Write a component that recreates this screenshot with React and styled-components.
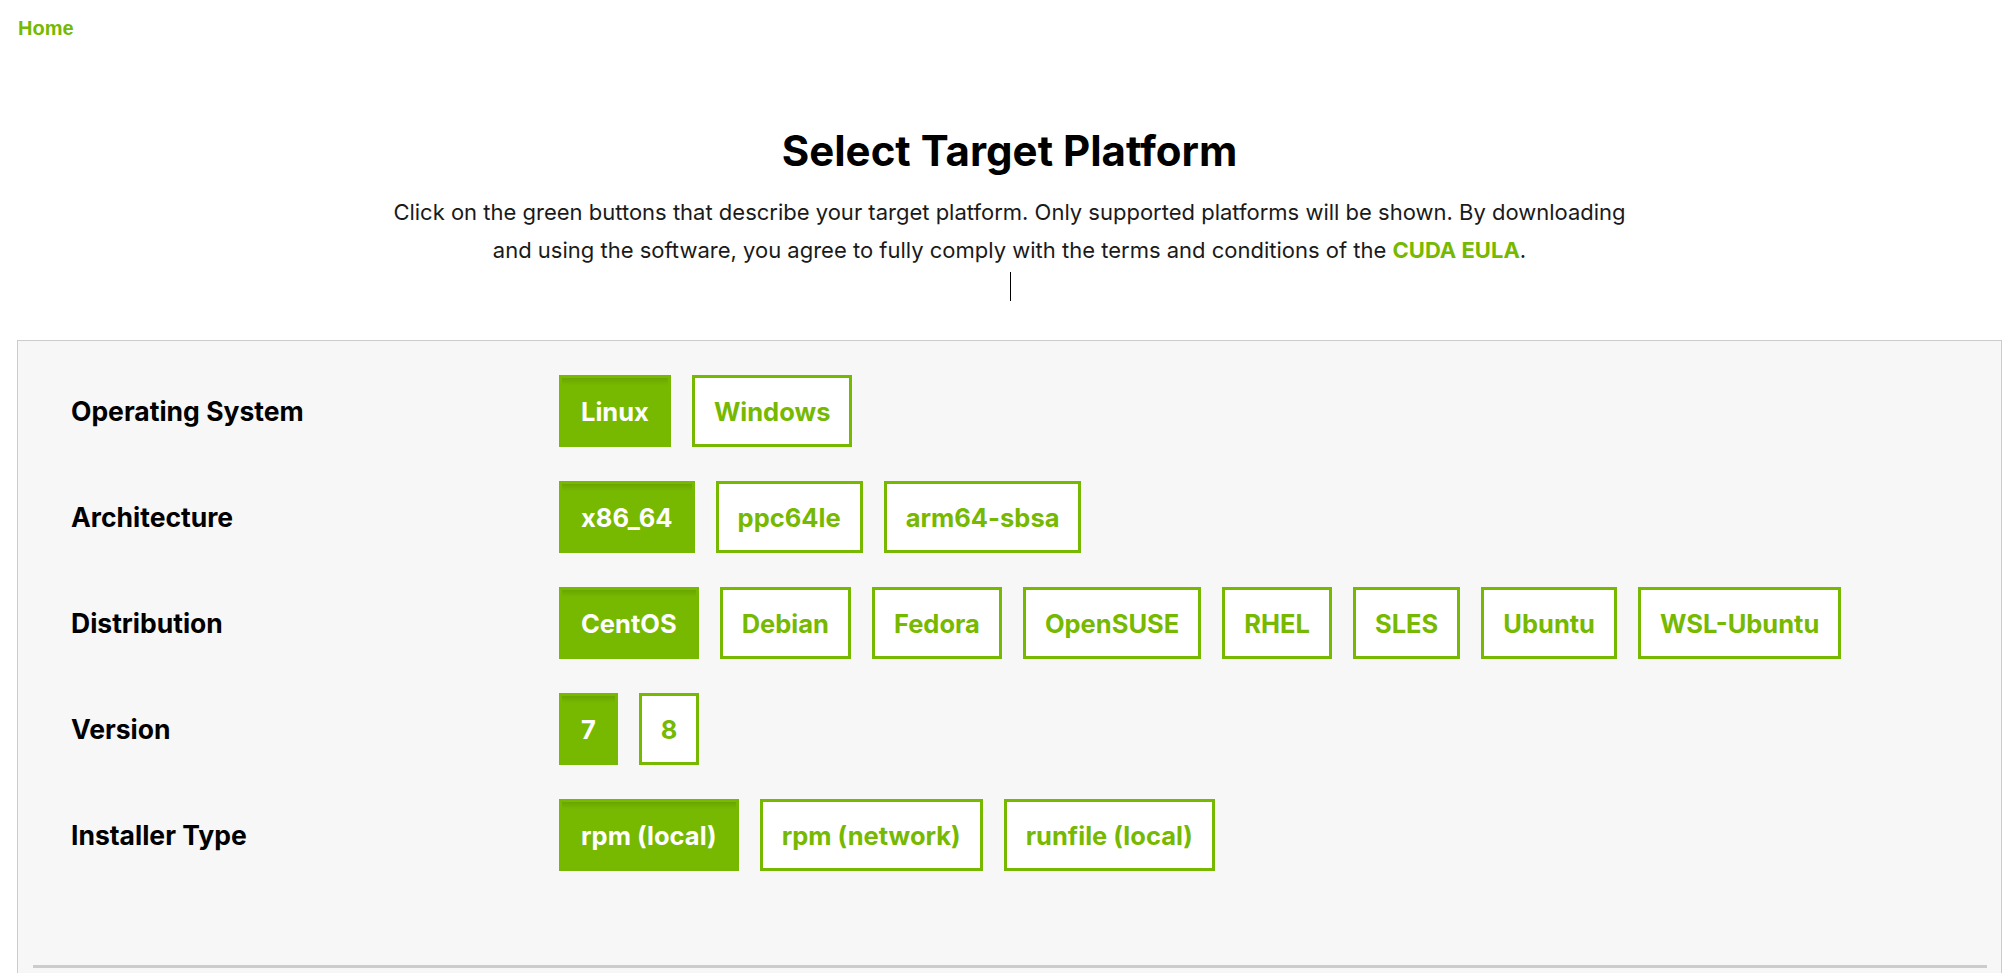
import React, { useState } from "react";
import styled, { createGlobalStyle } from "styled-components";

const GREEN = "#76b900";

const GlobalStyle = createGlobalStyle`
  html, body {
    margin: 0;
    padding: 0;
    background: #ffffff;
  }
  body {
    font-family: Inter, "Noto Sans", sans-serif;
    color: #1a1a1a;
  }
`;

const platformRows = [
  { label: "Operating System", key: "os", options: ["Linux", "Windows"] },
  { label: "Architecture", key: "arch", options: ["x86_64", "ppc64le", "arm64-sbsa"] },
  {
    label: "Distribution",
    key: "distro",
    options: ["CentOS", "Debian", "Fedora", "OpenSUSE", "RHEL", "SLES", "Ubuntu", "WSL-Ubuntu"],
  },
  { label: "Version", key: "version", options: ["7", "8"] },
  { label: "Installer Type", key: "installer", options: ["rpm (local)", "rpm (network)", "runfile (local)"] },
];

export default function App() {
  const [selected, setSelected] = useState({
    os: "Linux",
    arch: "x86_64",
    distro: "CentOS",
    version: "7",
    installer: "rpm (local)",
  });

  const pick = (key, value) => {
    setSelected({ ...selected, [key]: value });
  };

  return (
    <Page>
      <GlobalStyle />
      <Header>
        <HomeLink href="#">Home</HomeLink>
      </Header>

      <Intro>
        <Title>Select Target Platform</Title>
        <Description>
          Click on the green buttons that describe your target platform. Only supported platforms will be
          shown. By downloading and using the software, you agree to fully comply with the terms and
          conditions of the <EulaLink href="#">CUDA EULA</EulaLink>.
        </Description>
        <Caret />
      </Intro>

      <SelectorPanel>
        <RowList>
          {platformRows.map((row) => (
            <SelectorRow key={row.key}>
              <RowLabel>{row.label}</RowLabel>
              <OptionGroup>
                {row.options.map((option) => (
                  <OptionButton
                    key={option}
                    $active={selected[row.key] === option}
                    onClick={() => pick(row.key, option)}
                  >
                    {option}
                  </OptionButton>
                ))}
              </OptionGroup>
            </SelectorRow>
          ))}
        </RowList>
        <PanelRule />
      </SelectorPanel>
    </Page>
  );
}

const Page = styled.div`
  padding: 0 5px 0 17px;
`;

const Header = styled.header`
  padding: 17px 0 0 1px;
  height: 112px;
  box-sizing: border-box;
`;

const HomeLink = styled.a`
  font-family: "Liberation Sans", Arial, sans-serif;
  font-weight: 700;
  font-size: 20px;
  line-height: 23px;
  color: ${GREEN};
  text-decoration: none;
`;

const Intro = styled.section`
  display: flex;
  flex-direction: column;
  align-items: center;
  text-align: center;
  margin-top: 14px;
`;

const Title = styled.h1`
  margin: 0;
  font-size: 42px;
  line-height: 50px;
  font-weight: 700;
  color: #000000;
`;

const Description = styled.p`
  margin: 17px 0 0;
  max-width: 1258px;
  font-size: 22px;
  line-height: 38px;
  font-weight: 400;
  color: #1a1a1a;
`;

const EulaLink = styled.a`
  color: ${GREEN};
  font-weight: 700;
  text-decoration: none;
`;

const Caret = styled.span`
  display: block;
  width: 1px;
  height: 29px;
  margin: 3px 0 0 2px;
  background: #000000;
`;

const SelectorPanel = styled.section`
  margin-top: 39px;
  background: #f7f7f7;
  border: 1px solid #cccccc;
  border-bottom: none;
  padding: 34px 14px 40px 15px;
`;

const RowList = styled.div`
  display: flex;
  flex-direction: column;
  gap: 34px;
  padding-left: 38px;
`;

const SelectorRow = styled.div`
  display: grid;
  grid-template-columns: 488px 1fr;
  align-items: center;
`;

const RowLabel = styled.div`
  font-size: 26.5px;
  font-weight: 700;
  color: #000000;
`;

const OptionGroup = styled.div`
  display: flex;
  flex-wrap: wrap;
  gap: 21px;
`;

const OptionButton = styled.button`
  box-sizing: border-box;
  height: 72px;
  padding: 0 19px;
  border: 3px solid ${GREEN};
  border-radius: 0;
  font-family: Inter, "Noto Sans", sans-serif;
  font-size: 25.5px;
  font-weight: 700;
  cursor: pointer;
  color: ${(p) => (p.$active ? "#ffffff" : GREEN)};
  background: ${(p) => (p.$active ? `linear-gradient(#6aa500 0, ${GREEN} 7px)` : "#ffffff")};
`;

const PanelRule = styled.hr`
  margin: 94px 0 0;
  border: none;
  height: 3px;
  background: #cccccc;
`;
